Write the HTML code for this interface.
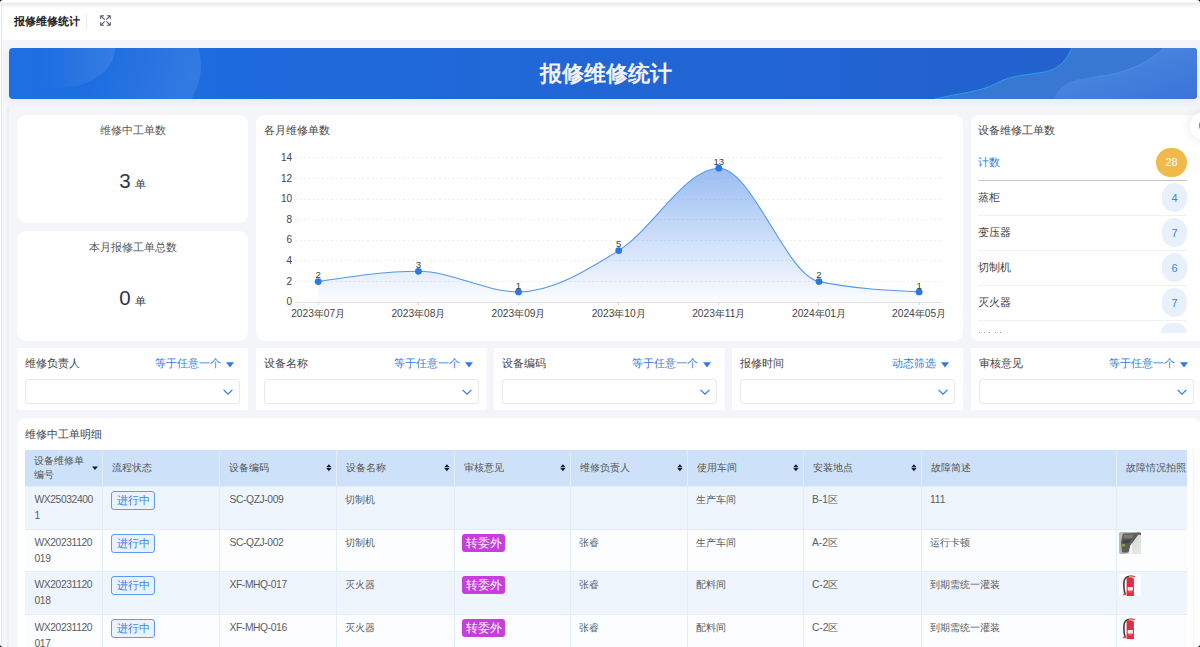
<!DOCTYPE html>
<html><head><meta charset="utf-8">
<style>
*{margin:0;padding:0;box-sizing:border-box}
html,body{width:1200px;height:647px;overflow:hidden;background:#f4f5f9;font-family:"Liberation Sans",sans-serif;color:#333}
.abs{position:absolute}
#hdr{position:absolute;left:0;top:0;width:1200px;height:40px;background:#fff}
#hdr .shade{position:absolute;left:0;top:2px;width:1200px;height:7px;background:linear-gradient(#fff 0%,#ebebeb 20%,#fafafa 70%,#fff 100%)}
#hdr .t{position:absolute;left:14px;top:14px;font-size:11px;font-weight:bold;color:#222;line-height:14px;white-space:nowrap}
#hdr .sep{position:absolute;left:86px;top:13px;width:1px;height:16px;background:#ececec}
.frame-l{position:absolute;left:1px;top:4px;width:1px;height:643px;background:#e4e6ea}
#banner{position:absolute;left:9px;top:48px;width:1188px;height:51px;border-radius:4px;box-shadow:0 3px 8px rgba(40,40,80,0.05);overflow:hidden;background:linear-gradient(90deg,#1d6fe2 0%,#2166d6 50%,#2360cc 100%)}
#banner .title{position:absolute;left:0;width:100%;top:60px;text-align:center;font-size:22px;font-weight:bold;color:#f2f2f2;line-height:26px}
.card{position:absolute;background:#fff;border-radius:9px}
.kt{position:absolute;left:0;width:100%;text-align:center;font-size:11px;color:#555;line-height:14px}
.kv{position:absolute;left:0;width:100%;text-align:center;color:#2c3547;white-space:nowrap}
.kv b{font-weight:normal;font-size:20.5px}
.kv i{font-style:normal;font-size:11px;margin-left:4px}
.fl{position:absolute;left:8px;top:8px;font-size:11px;color:#444;line-height:14px;white-space:nowrap}
.fo{position:absolute;right:27px;top:8px;font-size:11px;color:#2f7ae5;line-height:14px;white-space:nowrap}
.sel{position:absolute;left:8px;top:31px;width:215px;height:25px;border:1px solid #e8e9ed;border-radius:3px}
.th{position:absolute;font-size:10.3px;color:#555;line-height:14px;white-space:nowrap}
.td{position:absolute;font-size:10.3px;color:#5a5d63;line-height:16.2px;white-space:nowrap}
.tagb{position:absolute;width:44px;height:18.5px;border:1px solid #5c9bf0;border-radius:3px;background:#e9f2fd;color:#3a7ee8;font-size:11.4px;text-align:center;line-height:16.5px}
.tagm{position:absolute;width:43px;height:18px;border-radius:3px;background:#c63fdd;color:#fff;font-size:11.5px;text-align:center;line-height:18px}
.lat{letter-spacing:-0.4px}
</style></head><body>
<div id="hdr"><div class="shade"></div><div class="t">报修维修统计</div><div class="sep"></div>
<svg class="abs" style="left:100px;top:15px" width="11" height="11" viewBox="0 0 11 11" fill="none" stroke="#505766" stroke-width="1.05" stroke-linecap="round" stroke-linejoin="round">
<path d="M0.7,3.6V0.7H3.6M0.9,0.9L4.4,4.4M7.4,0.7H10.3V3.6M10.1,0.9L6.6,4.4M10.3,7.4V10.3H7.4M10.1,10.1L6.6,6.6M3.6,10.3H0.7V7.4M0.9,10.1L4.4,6.6"/></svg>
</div>
<div class="frame-l"></div><div class="abs" style="left:0;top:0;width:1px;height:647px;background:#fff"></div><div class="abs" style="left:7px;top:107px;width:2px;height:540px;background:#ededf2"></div><div class="abs" style="left:2px;top:40px;width:5px;height:607px;background:#f5f6f9"></div>
<div id="banner">
<svg class="abs" style="left:0;top:0" width="1188" height="51">
<defs><linearGradient id="bg1" x1="0" y1="0" x2="1" y2="0"><stop offset="0.35" stop-color="#fff" stop-opacity="0"/><stop offset="1" stop-color="#fff" stop-opacity="0.10"/></linearGradient>
<linearGradient id="bg2" x1="0" y1="0" x2="1" y2="0.3"><stop offset="0.4" stop-color="#fff" stop-opacity="0"/><stop offset="1" stop-color="#fff" stop-opacity="0.09"/></linearGradient></defs>
<ellipse cx="50" cy="0" rx="56" ry="40" fill="url(#bg1)"/>
<ellipse cx="120" cy="18" rx="72" ry="66" fill="url(#bg2)"/>
<defs><linearGradient id="w2" x1="0" y1="0" x2="1" y2="1"><stop offset="0" stop-color="#4e8ee0"/><stop offset="1" stop-color="#3a74d8"/></linearGradient></defs>
<path d="M926,51 C950,45 972,44 988,35 C1003,27 1018,27 1035,24 C1052,21 1058,10 1063,0 L1188,0 L1188,51 Z" fill="#3878d2"/>
<path d="M926,51 C950,45 972,44 988,35 C1003,27 1018,27 1035,24 C1052,21 1058,10 1063,0" fill="none" stroke="#2aa6e2" stroke-width="0.9"/>
<path d="M1046,51 C1049,38 1060,31 1088,28.5 C1112,26 1135,18 1155,0 L1188,0 L1188,51 Z" fill="url(#w2)"/>
<path d="M1088,28.5 C1112,26 1135,18 1155,0" fill="none" stroke="#6aa2ea" stroke-width="0.7" opacity="0.6"/>
</svg>
<div class="title" style="top:13px;padding-left:5px">报修维修统计</div>
</div>

<!-- KPI cards -->
<div class="card" style="left:17px;top:115px;width:231px;height:108px">
<div class="kt" style="top:8px">维修中工单数</div>
<div class="kv" style="top:53.8px"><b>3</b><i>单</i></div>
</div>
<div class="card" style="left:17px;top:231px;width:231px;height:109.5px">
<div class="kt" style="top:9px">本月报修工单总数</div>
<div class="kv" style="top:54.8px"><b>0</b><i>单</i></div>
</div>

<!-- chart card -->
<div class="card" style="left:256px;top:115px;width:707px;height:225.5px"></div>
<div class="abs" style="left:264px;top:123px;font-size:11px;color:#444;line-height:14px">各月维修单数</div>
<svg id="chart" class="abs" style="left:0;top:0" width="1200" height="340" viewBox="0 0 1200 340">
<defs><linearGradient id="ga" x1="0" y1="0" x2="0" y2="1"><stop offset="0" stop-color="#5b95ea" stop-opacity="0.62"/><stop offset="1" stop-color="#5b95ea" stop-opacity="0.02"/></linearGradient></defs>
<line x1="295" y1="281.5" x2="942" y2="281.5" stroke="#ececec" stroke-width="1" stroke-dasharray="2,2.5"/>
<line x1="295" y1="260.5" x2="942" y2="260.5" stroke="#ececec" stroke-width="1" stroke-dasharray="2,2.5"/>
<line x1="295" y1="240.5" x2="942" y2="240.5" stroke="#ececec" stroke-width="1" stroke-dasharray="2,2.5"/>
<line x1="295" y1="219.5" x2="942" y2="219.5" stroke="#ececec" stroke-width="1" stroke-dasharray="2,2.5"/>
<line x1="295" y1="199.5" x2="942" y2="199.5" stroke="#ececec" stroke-width="1" stroke-dasharray="2,2.5"/>
<line x1="295" y1="178.5" x2="942" y2="178.5" stroke="#ececec" stroke-width="1" stroke-dasharray="2,2.5"/>
<line x1="295" y1="157.5" x2="942" y2="157.5" stroke="#ececec" stroke-width="1" stroke-dasharray="2,2.5"/>
<path d="M318.2,281.6 C351.6,276.4 385.0,271.3 418.4,271.3 C451.7,271.3 485.1,291.9 518.5,291.9 C551.9,291.9 585.3,271.3 618.7,250.6 C652.0,230.0 685.4,168.2 718.8,168.2 C752.2,168.2 785.6,274.7 819.0,281.6 C852.3,288.5 885.7,290.2 919.1,291.9 L919.1,302.2 L318.2,302.2 Z" fill="url(#ga)"/>
<line x1="295" y1="302.5" x2="942" y2="302.5" stroke="#e0e0e0" stroke-width="1"/>
<line x1="318.5" y1="302" x2="318.5" y2="305" stroke="#d8d8d8" stroke-width="1"/>
<line x1="418.5" y1="302" x2="418.5" y2="305" stroke="#d8d8d8" stroke-width="1"/>
<line x1="518.5" y1="302" x2="518.5" y2="305" stroke="#d8d8d8" stroke-width="1"/>
<line x1="618.5" y1="302" x2="618.5" y2="305" stroke="#d8d8d8" stroke-width="1"/>
<line x1="718.5" y1="302" x2="718.5" y2="305" stroke="#d8d8d8" stroke-width="1"/>
<line x1="818.5" y1="302" x2="818.5" y2="305" stroke="#d8d8d8" stroke-width="1"/>
<line x1="919.5" y1="302" x2="919.5" y2="305" stroke="#d8d8d8" stroke-width="1"/>
<path d="M318.2,281.6 C351.6,276.4 385.0,271.3 418.4,271.3 C451.7,271.3 485.1,291.9 518.5,291.9 C551.9,291.9 585.3,271.3 618.7,250.6 C652.0,230.0 685.4,168.2 718.8,168.2 C752.2,168.2 785.6,274.7 819.0,281.6 C852.3,288.5 885.7,290.2 919.1,291.9" fill="none" stroke="#5496ee" stroke-width="1.1"/>
<circle cx="318.2" cy="281.6" r="3.4" fill="#2a78e4"/>
<text x="318.2" y="278.3" text-anchor="middle" font-size="9.6" fill="#404040">2</text>
<circle cx="418.4" cy="271.3" r="3.4" fill="#2a78e4"/>
<text x="418.4" y="268.0" text-anchor="middle" font-size="9.6" fill="#404040">3</text>
<circle cx="518.5" cy="291.9" r="3.4" fill="#2a78e4"/>
<text x="518.5" y="288.6" text-anchor="middle" font-size="9.6" fill="#404040">1</text>
<circle cx="618.7" cy="250.6" r="3.4" fill="#2a78e4"/>
<text x="618.7" y="247.3" text-anchor="middle" font-size="9.6" fill="#404040">5</text>
<circle cx="718.8" cy="168.2" r="3.4" fill="#2a78e4"/>
<text x="718.8" y="164.9" text-anchor="middle" font-size="9.6" fill="#404040">13</text>
<circle cx="819.0" cy="281.6" r="3.4" fill="#2a78e4"/>
<text x="819.0" y="278.3" text-anchor="middle" font-size="9.6" fill="#404040">2</text>
<circle cx="919.1" cy="291.9" r="3.4" fill="#2a78e4"/>
<text x="919.1" y="288.6" text-anchor="middle" font-size="9.6" fill="#404040">1</text>
<text x="292" y="305.2" text-anchor="end" font-size="10" fill="#444">0</text>
<text x="292" y="284.6" text-anchor="end" font-size="10" fill="#444">2</text>
<text x="292" y="264.0" text-anchor="end" font-size="10" fill="#444">4</text>
<text x="292" y="243.3" text-anchor="end" font-size="10" fill="#444">6</text>
<text x="292" y="222.7" text-anchor="end" font-size="10" fill="#444">8</text>
<text x="292" y="202.1" text-anchor="end" font-size="10" fill="#444">10</text>
<text x="292" y="181.5" text-anchor="end" font-size="10" fill="#444">12</text>
<text x="292" y="160.9" text-anchor="end" font-size="10" fill="#444">14</text>
<text x="318.2" y="317.2" text-anchor="middle" font-size="10.2" fill="#444">2023年07月</text>
<text x="418.4" y="317.2" text-anchor="middle" font-size="10.2" fill="#444">2023年08月</text>
<text x="518.5" y="317.2" text-anchor="middle" font-size="10.2" fill="#444">2023年09月</text>
<text x="618.7" y="317.2" text-anchor="middle" font-size="10.2" fill="#444">2023年10月</text>
<text x="718.8" y="317.2" text-anchor="middle" font-size="10.2" fill="#444">2023年11月</text>
<text x="819.0" y="317.2" text-anchor="middle" font-size="10.2" fill="#444">2024年01月</text>
<text x="919.1" y="317.2" text-anchor="middle" font-size="10.2" fill="#444">2024年05月</text>
</svg>

<!-- right list card -->
<div class="card" style="left:971px;top:115px;width:240px;height:225.5px"></div>
<div class="abs" style="left:978px;top:123px;font-size:11px;color:#444;line-height:14px">设备维修工单数</div>
<div class="abs" style="left:978px;top:155px;font-size:11px;color:#2f7ae5;line-height:14px">计数</div>
<div class="abs" style="left:1156px;top:148px;width:31px;height:29px;border-radius:15px;background:#f0b94a;color:#fff;font-size:11px;text-align:center;line-height:29px">28</div>
<div class="abs" style="left:978px;top:180px;width:209px;height:1px;background:#c8c8c8"></div>
<div class="abs" style="left:978px;top:190px;font-size:11px;color:#444;line-height:14px">蒸柜</div>
<div class="abs" style="left:1162px;top:183px;width:25px;height:28.5px;border-radius:13px;background:#e8f0fc;color:#3b82e6;font-size:11px;text-align:center;line-height:30px">4</div>
<div class="abs" style="left:978px;top:215px;width:209px;height:1px;background:#f0f1f3"></div>
<div class="abs" style="left:978px;top:225px;font-size:11px;color:#444;line-height:14px">变压器</div>
<div class="abs" style="left:1162px;top:218px;width:25px;height:28.5px;border-radius:13px;background:#e8f0fc;color:#3b82e6;font-size:11px;text-align:center;line-height:30px">7</div>
<div class="abs" style="left:978px;top:250px;width:209px;height:1px;background:#f0f1f3"></div>
<div class="abs" style="left:978px;top:260px;font-size:11px;color:#444;line-height:14px">切制机</div>
<div class="abs" style="left:1162px;top:253px;width:25px;height:28.5px;border-radius:13px;background:#e8f0fc;color:#3b82e6;font-size:11px;text-align:center;line-height:30px">6</div>
<div class="abs" style="left:978px;top:285px;width:209px;height:1px;background:#f0f1f3"></div>
<div class="abs" style="left:978px;top:295px;font-size:11px;color:#444;line-height:14px">灭火器</div>
<div class="abs" style="left:1162px;top:288px;width:25px;height:28.5px;border-radius:13px;background:#e8f0fc;color:#3b82e6;font-size:11px;text-align:center;line-height:30px">7</div>
<div class="abs" style="left:978px;top:320px;width:209px;height:1px;background:#f0f1f3"></div>
<div class="abs" style="left:1161px;top:323px;width:26px;height:10px;border-radius:13px 13px 0 0;background:#e8f0fc"></div>
<div class="abs" style="left:979.0px;top:331.5px;width:1px;height:1px;background:#9a9a9a"></div><div class="abs" style="left:984.2px;top:331.5px;width:1px;height:1px;background:#9a9a9a"></div><div class="abs" style="left:989.4px;top:331.5px;width:1px;height:1px;background:#9a9a9a"></div><div class="abs" style="left:994.6px;top:331.5px;width:1px;height:1px;background:#9a9a9a"></div><div class="abs" style="left:999.8px;top:331.5px;width:1px;height:1px;background:#9a9a9a"></div>
<div class="abs" style="left:1190px;top:112px;width:28px;height:28px;border-radius:14px;background:#fff;box-shadow:0 0 12px rgba(0,0,0,0.10)"></div>
<div class="abs" style="left:1199px;top:122px;width:3px;height:7px;background:#7684ee;border-radius:2px 0 0 2px"></div>

<!-- filter cards -->
<div class="card" style="left:17px;top:348px;width:231px;height:62px;border-radius:1px"><div class="fl">维修负责人</div><div class="fo">等于任意一个</div><svg class="abs" style="left:209px;top:14px" width="8" height="6"><path d="M0,0.3H8L4,5.6Z" fill="#2f7ae5"/></svg><div class="sel"><svg class="abs" style="left:197px;top:9px" width="10" height="7" fill="none" stroke="#2f7ae5" stroke-width="1.2"><path d="M0.6,0.8L5,5.2L9.4,0.8"/></svg></div></div>
<div class="card" style="left:256px;top:348px;width:231px;height:62px;border-radius:1px"><div class="fl">设备名称</div><div class="fo">等于任意一个</div><svg class="abs" style="left:209px;top:14px" width="8" height="6"><path d="M0,0.3H8L4,5.6Z" fill="#2f7ae5"/></svg><div class="sel"><svg class="abs" style="left:197px;top:9px" width="10" height="7" fill="none" stroke="#2f7ae5" stroke-width="1.2"><path d="M0.6,0.8L5,5.2L9.4,0.8"/></svg></div></div>
<div class="card" style="left:494px;top:348px;width:231px;height:62px;border-radius:1px"><div class="fl">设备编码</div><div class="fo">等于任意一个</div><svg class="abs" style="left:209px;top:14px" width="8" height="6"><path d="M0,0.3H8L4,5.6Z" fill="#2f7ae5"/></svg><div class="sel"><svg class="abs" style="left:197px;top:9px" width="10" height="7" fill="none" stroke="#2f7ae5" stroke-width="1.2"><path d="M0.6,0.8L5,5.2L9.4,0.8"/></svg></div></div>
<div class="card" style="left:732px;top:348px;width:231px;height:62px;border-radius:1px"><div class="fl">报修时间</div><div class="fo">动态筛选</div><svg class="abs" style="left:209px;top:14px" width="8" height="6"><path d="M0,0.3H8L4,5.6Z" fill="#2f7ae5"/></svg><div class="sel"><svg class="abs" style="left:197px;top:9px" width="10" height="7" fill="none" stroke="#2f7ae5" stroke-width="1.2"><path d="M0.6,0.8L5,5.2L9.4,0.8"/></svg></div></div>
<div class="card" style="left:971px;top:348px;width:231px;height:62px;border-radius:1px"><div class="fl">审核意见</div><div class="fo">等于任意一个</div><svg class="abs" style="left:209px;top:14px" width="8" height="6"><path d="M0,0.3H8L4,5.6Z" fill="#2f7ae5"/></svg><div class="sel"><svg class="abs" style="left:197px;top:9px" width="10" height="7" fill="none" stroke="#2f7ae5" stroke-width="1.2"><path d="M0.6,0.8L5,5.2L9.4,0.8"/></svg></div></div>
<!-- table card -->
<div class="card" style="left:17px;top:418px;width:1184px;height:240px"></div>
<div class="abs" style="left:25px;top:427px;font-size:11px;color:#444;line-height:14px">维修中工单明细</div>
<div class="abs" style="left:25px;top:450px;width:1169px;height:200px;border-right:1px solid #eef3fa"></div>
<div class="abs" style="left:25px;top:450px;width:1162px;height:36px;background:#cde2f8"></div>
<div class="th" style="left:33.7px;top:453.5px;line-height:14.6px">设备维修单<br>编号</div>
<svg class="abs" style="left:92px;top:465.5px" width="6" height="5"><path d="M0,0.5H6L3,4Z" fill="#1b1b2b"/></svg>
<div class="th" style="left:111.7px;top:461px;width:109px;overflow:hidden">流程状态</div>
<div class="th" style="left:228.7px;top:461px;width:109px;overflow:hidden">设备编码</div>
<svg class="abs" style="left:325.8px;top:463.8px" width="6" height="8"><path d="M0.2,3.2L2.9,0.2L5.6,3.2Z M0.2,4.1H5.6L2.9,7.2Z" fill="#1b1b2b"/></svg>
<div class="th" style="left:345.7px;top:461px;width:110px;overflow:hidden">设备名称</div>
<svg class="abs" style="left:443.8px;top:463.8px" width="6" height="8"><path d="M0.2,3.2L2.9,0.2L5.6,3.2Z M0.2,4.1H5.6L2.9,7.2Z" fill="#1b1b2b"/></svg>
<div class="th" style="left:463.7px;top:461px;width:108px;overflow:hidden">审核意见</div>
<svg class="abs" style="left:559.8px;top:463.8px" width="6" height="8"><path d="M0.2,3.2L2.9,0.2L5.6,3.2Z M0.2,4.1H5.6L2.9,7.2Z" fill="#1b1b2b"/></svg>
<div class="th" style="left:579.7px;top:461px;width:109px;overflow:hidden">维修负责人</div>
<svg class="abs" style="left:676.8px;top:463.8px" width="6" height="8"><path d="M0.2,3.2L2.9,0.2L5.6,3.2Z M0.2,4.1H5.6L2.9,7.2Z" fill="#1b1b2b"/></svg>
<div class="th" style="left:696.7px;top:461px;width:108px;overflow:hidden">使用车间</div>
<svg class="abs" style="left:792.8px;top:463.8px" width="6" height="8"><path d="M0.2,3.2L2.9,0.2L5.6,3.2Z M0.2,4.1H5.6L2.9,7.2Z" fill="#1b1b2b"/></svg>
<div class="th" style="left:812.7px;top:461px;width:110px;overflow:hidden">安装地点</div>
<svg class="abs" style="left:910.8px;top:463.8px" width="6" height="8"><path d="M0.2,3.2L2.9,0.2L5.6,3.2Z M0.2,4.1H5.6L2.9,7.2Z" fill="#1b1b2b"/></svg>
<div class="th" style="left:930.7px;top:461px;width:187px;overflow:hidden">故障简述</div>
<div class="th" style="left:1125.7px;top:461px;width:62px;overflow:hidden">故障情况拍照</div>
<div class="abs" style="left:25px;top:486px;width:1162px;height:43px;background:#eef5fd;border-top:1px solid #e4edf8"></div>
<div class="abs" style="left:25px;top:529px;width:1162px;height:42px;background:#fcfdff;border-top:1px solid #e4edf8"></div>
<div class="abs" style="left:25px;top:571px;width:1162px;height:43px;background:#eef5fd;border-top:1px solid #e4edf8"></div>
<div class="abs" style="left:25px;top:614px;width:1162px;height:42px;background:#fcfdff;border-top:1px solid #e4edf8"></div>
<div class="abs" style="left:101.7px;top:450px;width:1.8px;height:200px;background:#e3eefa"></div>
<div class="abs" style="left:218.7px;top:450px;width:1.8px;height:200px;background:#e3eefa"></div>
<div class="abs" style="left:335.7px;top:450px;width:1.8px;height:200px;background:#e3eefa"></div>
<div class="abs" style="left:453.7px;top:450px;width:1.8px;height:200px;background:#e3eefa"></div>
<div class="abs" style="left:569.7px;top:450px;width:1.8px;height:200px;background:#e3eefa"></div>
<div class="abs" style="left:686.7px;top:450px;width:1.8px;height:200px;background:#e3eefa"></div>
<div class="abs" style="left:802.7px;top:450px;width:1.8px;height:200px;background:#e3eefa"></div>
<div class="abs" style="left:920.7px;top:450px;width:1.8px;height:200px;background:#e3eefa"></div>
<div class="abs" style="left:1115.7px;top:450px;width:1.8px;height:200px;background:#e3eefa"></div>
<div class="td lat" style="left:34.5px;top:491.5px">WX25032400<br>1</div>
<div class="tagb" style="left:111px;top:491px">进行中</div>
<div class="td lat" style="left:229.5px;top:491.5px">SC-QZJ-009</div>
<div class="td" style="left:344.9px;top:491.5px">切制机</div>
<div class="td" style="left:695.9px;top:491.5px">生产车间</div>
<div class="td" style="left:811.9px;top:491.5px">B-1区</div>
<div class="td" style="left:929.9px;top:491.5px">111</div>
<div class="td lat" style="left:34.5px;top:534.5px">WX20231120<br>019</div>
<div class="tagb" style="left:111px;top:534px">进行中</div>
<div class="td lat" style="left:229.5px;top:534.5px">SC-QZJ-002</div>
<div class="td" style="left:344.9px;top:534.5px">切制机</div>
<div class="td" style="left:578.9px;top:534.5px">张睿</div>
<div class="td" style="left:695.9px;top:534.5px">生产车间</div>
<div class="td" style="left:811.9px;top:534.5px">A-2区</div>
<div class="td" style="left:929.9px;top:534.5px">运行卡顿</div>
<div class="tagm" style="left:462px;top:533.6px">转委外</div>
<svg class="abs" style="left:1119px;top:532px" width="22" height="22" viewBox="0 0 22 22"><defs><clipPath id="cm1"><rect width="22" height="22" rx="2.5"/></clipPath><linearGradient id="gl1" x1="0" y1="0" x2="1" y2="1"><stop offset="0" stop-color="#c9c9c5"/><stop offset="1" stop-color="#ececea"/></linearGradient></defs><g clip-path="url(#cm1)"><rect width="22" height="22" fill="#bdbdb9"/><path d="M0,0H20L22,1V22H0Z" fill="#b8b8b4"/><path d="M4,1.5L17,1L19.5,2.5L12,13L9.5,20.5L3,20.5L2,10Z" fill="#5c5c5a"/><path d="M5,3L15,2.5L13,6L5,6.5Z" fill="#7a7a78"/><path d="M4,8L12,7.5L10,11L4,11.5Z" fill="#444442"/><path d="M19.5,2.5L22,1.5V22H6L9.5,20.5L12,13Z" fill="url(#gl1)"/><path d="M11,14L13,11L13.5,22H10Z" fill="#f2f2f0"/><rect x="3" y="12" width="3" height="2.5" fill="#8c9a48"/><path d="M17,1L22,0V3L19.5,2.5Z" fill="#6a5050"/></g></svg>
<div class="td lat" style="left:34.5px;top:576.5px">WX20231120<br>018</div>
<div class="tagb" style="left:111px;top:576px">进行中</div>
<div class="td lat" style="left:229.5px;top:576.5px">XF-MHQ-017</div>
<div class="td" style="left:344.9px;top:576.5px">灭火器</div>
<div class="td" style="left:578.9px;top:576.5px">张睿</div>
<div class="td" style="left:695.9px;top:576.5px">配料间</div>
<div class="td" style="left:811.9px;top:576.5px">C-2区</div>
<div class="td" style="left:929.9px;top:576.5px">到期需统一灌装</div>
<div class="tagm" style="left:462px;top:575.6px">转委外</div>
<svg class="abs" style="left:1119px;top:574px" width="22" height="22" viewBox="0 0 22 22"><rect width="22" height="22" rx="2" fill="#fdfdfd"/><path d="M10.5,2.3C7,2.8 5,5 4.9,9C4.8,14 5,18 6.5,20.6" fill="none" stroke="#3e3e3e" stroke-width="1.6"/><path d="M10.8,1.6L16,2.6" stroke="#e04050" stroke-width="1.2"/><rect x="10" y="1" width="2" height="2.5" fill="#d8a040"/><path d="M7.6,5.2Q7.6,3.2 11.2,3.2Q14.9,3.2 14.9,5.2V22H7.6Z" fill="#e62a3a"/><rect x="8.7" y="13" width="5.2" height="3.6" fill="#ece8ec"/><rect x="8.7" y="9" width="5.2" height="1" fill="#7a5aa8" opacity="0.7"/><rect x="9.2" y="17.5" width="4" height="0.8" fill="#f08090"/><path d="M3.8,20.6H6.8" stroke="#e05050" stroke-width="1.4"/></svg>
<div class="td lat" style="left:34.5px;top:619.5px">WX20231120<br>017</div>
<div class="tagb" style="left:111px;top:619px">进行中</div>
<div class="td lat" style="left:229.5px;top:619.5px">XF-MHQ-016</div>
<div class="td" style="left:344.9px;top:619.5px">灭火器</div>
<div class="td" style="left:578.9px;top:619.5px">张睿</div>
<div class="td" style="left:695.9px;top:619.5px">配料间</div>
<div class="td" style="left:811.9px;top:619.5px">C-2区</div>
<div class="td" style="left:929.9px;top:619.5px">到期需统一灌装</div>
<div class="tagm" style="left:462px;top:618.6px">转委外</div>
<svg class="abs" style="left:1119px;top:617px" width="22" height="22" viewBox="0 0 22 22"><rect width="22" height="22" rx="2" fill="#fdfdfd"/><path d="M10.5,2.3C7,2.8 5,5 4.9,9C4.8,14 5,18 6.5,20.6" fill="none" stroke="#3e3e3e" stroke-width="1.6"/><path d="M10.8,1.6L16,2.6" stroke="#e04050" stroke-width="1.2"/><rect x="10" y="1" width="2" height="2.5" fill="#d8a040"/><path d="M7.6,5.2Q7.6,3.2 11.2,3.2Q14.9,3.2 14.9,5.2V22H7.6Z" fill="#e62a3a"/><rect x="8.7" y="13" width="5.2" height="3.6" fill="#ece8ec"/><rect x="8.7" y="9" width="5.2" height="1" fill="#7a5aa8" opacity="0.7"/><rect x="9.2" y="17.5" width="4" height="0.8" fill="#f08090"/><path d="M3.8,20.6H6.8" stroke="#e05050" stroke-width="1.4"/></svg>
<div style="position:absolute;left:-6px;top:-6px;width:1212px;height:659px;border:6px solid #000;border-radius:9px;pointer-events:none"></div>
</body></html>
